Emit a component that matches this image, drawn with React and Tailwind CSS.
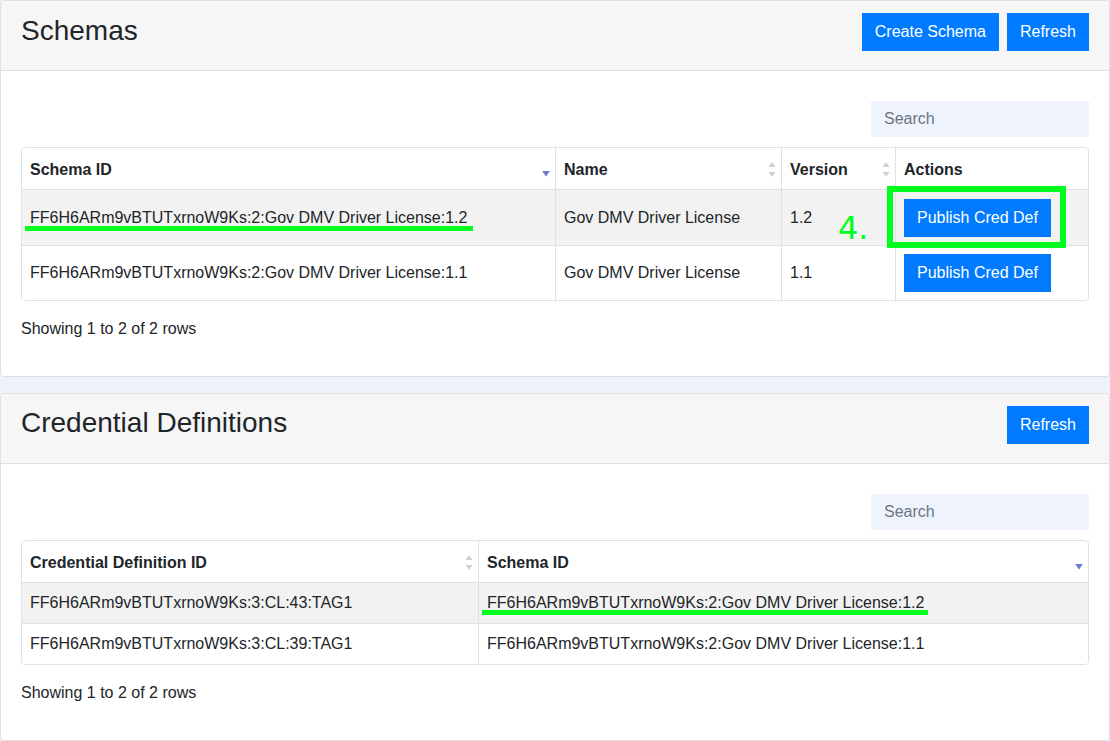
import React from "react";

const FONT = { fontFamily: '"Liberation Sans", Arial, sans-serif' };

function SortBoth() {
  return (
    <svg width="8" height="15" viewBox="0 0 8 15" className="shrink-0">
      <path d="M4 0 L7.5 5 L0.5 5 Z" fill="#d0d0d0" />
      <path d="M4 15 L7.5 10 L0.5 10 Z" fill="#d0d0d0" />
    </svg>
  );
}

function SortDesc() {
  return (
    <svg width="8" height="15" viewBox="0 0 8 15" className="shrink-0">
      <path d="M4 14.5 L7.8 9 L0.2 9 Z" fill="#6f77d4" />
    </svg>
  );
}

function Btn({ children }) {
  return (
    <button className="h-[38px] px-3 bg-[#007bff] text-white text-base leading-6 border border-[#007bff] whitespace-nowrap">
      {children}
    </button>
  );
}

function CardHeader({ title, buttons, titleClass }) {
  return (
    <div className="h-[70px] bg-[#f6f6f6] border-b border-[#dfdfdf] px-5 pt-3 flex items-start justify-between rounded-t-[4px]">
      <h3 className={`${titleClass} text-[28px] leading-[1.2] font-normal text-[#212529]`}>{title}</h3>
      <div className="flex gap-2">
        {buttons.map((b) => (
          <Btn key={b}>{b}</Btn>
        ))}
      </div>
    </div>
  );
}

function SearchBox() {
  return (
    <div className="flex justify-end">
      <input
        placeholder="Search"
        className="w-[218px] h-[36px] bg-[#eef3fd] px-3 text-base text-[#495057] placeholder:text-[#6c757d] outline-none border border-[#eef3fd]"
        style={FONT}
      />
    </div>
  );
}

function Showing() {
  return <div className="mt-4 text-base leading-6 text-[#212529]">Showing 1 to 2 of 2 rows</div>;
}

const Green = "#00ff1e";

export default function App() {
  const schemaRows = [
    { id: "FF6H6ARm9vBTUTxrnoW9Ks:2:Gov DMV Driver License:1.2", name: "Gov DMV Driver License", ver: "1.2", striped: true },
    { id: "FF6H6ARm9vBTUTxrnoW9Ks:2:Gov DMV Driver License:1.1", name: "Gov DMV Driver License", ver: "1.1", striped: false },
  ];
  const credRows = [
    { id: "FF6H6ARm9vBTUTxrnoW9Ks:3:CL:43:TAG1", schema: "FF6H6ARm9vBTUTxrnoW9Ks:2:Gov DMV Driver License:1.2", striped: true },
    { id: "FF6H6ARm9vBTUTxrnoW9Ks:3:CL:39:TAG1", schema: "FF6H6ARm9vBTUTxrnoW9Ks:2:Gov DMV Driver License:1.1", striped: false },
  ];

  const cols1 = "grid grid-cols-[533px_226px_114px_1fr]";
  const cols2 = "grid grid-cols-[456px_1fr]";

  return (
    <div className="w-[1110px] min-h-[741px] bg-[#edf2fb] text-[#212529]" style={FONT}>
      {/* Schemas card */}
      <div className="bg-white border border-[#dfdfdf] rounded-[4px]">
        <CardHeader title="Schemas" buttons={["Create Schema", "Refresh"]} titleClass="mt-[1px]" />
        <div className="px-5 pt-[30px] pb-[35px]">
          <SearchBox />
          <div className="relative mt-[10px]">
            <div className="border border-[#dee2e6] rounded-[4px] overflow-hidden">
              <div className={`${cols1} h-[42px] border-b border-[#dee2e6] font-bold`}>
                <div className="flex items-center justify-between pl-2 pr-[5px] pt-[2px]">
                  <span>Schema ID</span>
                  <SortDesc />
                </div>
                <div className="flex items-center justify-between pl-2 pr-[5px] pt-[2px] border-l border-[#dee2e6]">
                  <span>Name</span>
                  <SortBoth />
                </div>
                <div className="flex items-center justify-between pl-2 pr-[5px] pt-[2px] border-l border-[#dee2e6]">
                  <span>Version</span>
                  <SortBoth />
                </div>
                <div className="flex items-center pl-2 pt-[2px] border-l border-[#dee2e6]">
                  <span>Actions</span>
                </div>
              </div>
              {schemaRows.map((r, i) => (
                <div
                  key={r.id}
                  className={`${cols1} h-[55px] ${i > 0 ? "border-t border-[#dee2e6]" : ""} ${r.striped ? "bg-[#f2f2f2]" : "bg-white"}`}
                >
                  <div className="flex items-center px-2 whitespace-nowrap">{r.id}</div>
                  <div className="flex items-center px-2 border-l border-[#dee2e6]">{r.name}</div>
                  <div className="flex items-center px-2 border-l border-[#dee2e6]">{r.ver}</div>
                  <div className="flex items-center px-2 border-l border-[#dee2e6]">
                    <Btn>Publish Cred Def</Btn>
                  </div>
                </div>
              ))}
            </div>
            {/* annotations */}
            <div className="absolute left-[4px] top-[79px] w-[448px] h-[5px]" style={{ background: Green }} />
            <div
              className="absolute left-[866px] top-[39px] w-[179px] h-[62px] border-[6px]"
              style={{ borderColor: Green }}
            />
            <div
              className="absolute left-[817px] top-[65px] text-[32px] leading-none"
              style={{ color: Green, fontFamily: '"DejaVu Sans", sans-serif' }}
            >
              4.
            </div>
          </div>
          <Showing />
        </div>
      </div>

      <div className="h-4" />

      {/* Credential Definitions card */}
      <div className="bg-white border border-[#dfdfdf] rounded-[4px]">
        <CardHeader title="Credential Definitions" buttons={["Refresh"]} titleClass="" />
        <div className="px-5 pt-[30px] pb-[35px]">
          <SearchBox />
          <div className="relative mt-[10px]">
            <div className="border border-[#dee2e6] rounded-[4px] overflow-hidden">
              <div className={`${cols2} h-[42px] border-b border-[#dee2e6] font-bold`}>
                <div className="flex items-center justify-between pl-2 pr-[5px] pt-[2px]">
                  <span>Credential Definition ID</span>
                  <SortBoth />
                </div>
                <div className="flex items-center justify-between pl-2 pr-[5px] pt-[2px] border-l border-[#dee2e6]">
                  <span>Schema ID</span>
                  <SortDesc />
                </div>
              </div>
              {credRows.map((r, i) => (
                <div
                  key={r.id}
                  className={`${cols2} ${i > 0 ? "h-[41px] border-t border-[#dee2e6]" : "h-[40px]"} ${r.striped ? "bg-[#f2f2f2]" : "bg-white"}`}
                >
                  <div className="flex items-center px-2 whitespace-nowrap">{r.id}</div>
                  <div className="flex items-center px-2 border-l border-[#dee2e6] whitespace-nowrap">{r.schema}</div>
                </div>
              ))}
            </div>
            <div className="absolute left-[461px] top-[70px] w-[446px] h-[5px]" style={{ background: Green }} />
          </div>
          <Showing />
        </div>
      </div>
    </div>
  );
}
